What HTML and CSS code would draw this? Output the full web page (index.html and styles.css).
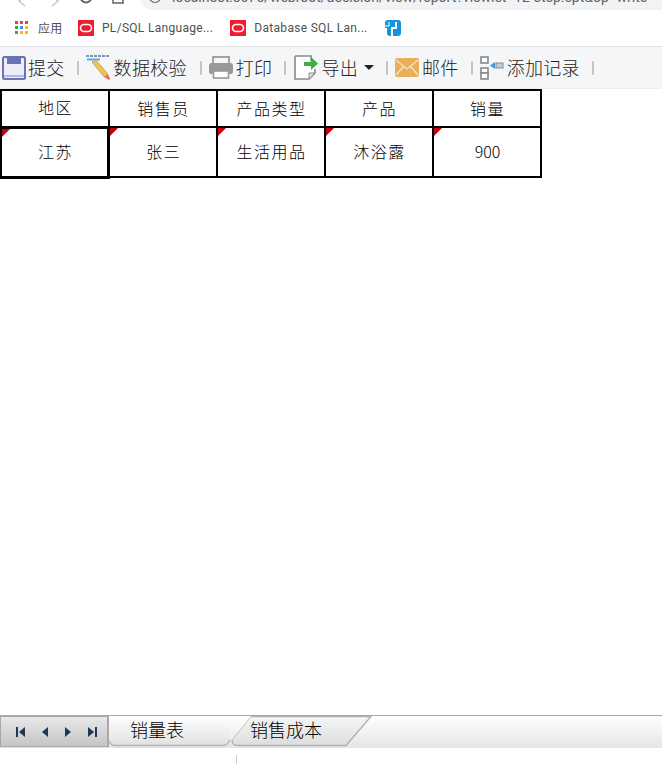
FILE: index.html
```html
<!DOCTYPE html>
<html lang="zh-CN">
<head>
    <meta charset="UTF-8">
    <title>填报</title>
    <link rel="stylesheet" href="styles.css">
</head>
<body>
    <div class="browser-top">
        <svg class="nav-icons" width="125" height="10" viewBox="0 0 125 10" fill="none" stroke="#5f6368" stroke-width="1.5">
            <path d="M25 -4l-6 5 6 5" stroke="#c4c6c9"/>
            <path d="M52 -4l6 5-6 5" stroke="#c4c6c9"/>
            <circle cx="86" cy="-3" r="5.500" stroke-width="2"/>
            <path d="M113 -3v6h10v-6"/>
        </svg>
        <div class="address">
            <svg width="12" height="10" viewBox="0 0 12 10" fill="none" stroke="#5f6368" stroke-width="1.2"><circle cx="6" cy="-3" r="5.500"/></svg>
            <span class="url">localhost:8075/webroot/decision/view/report?viewlet=12-step.cpt&amp;op=write</span>
        </div>
    </div>

    <div class="bookmarks">
        <a class="bookmark apps">
            <svg width="13" height="13" viewBox="0 0 13 13">
                <rect x="0" y="0" width="3" height="3" fill="#ea4335"/><rect x="5" y="0" width="3" height="3" fill="#ea4335"/><rect x="10" y="0" width="3" height="3" fill="#ea4335"/>
                <rect x="0" y="5" width="3" height="3" fill="#34a853"/><rect x="5" y="5" width="3" height="3" fill="#4285f4"/><rect x="10" y="5" width="3" height="3" fill="#fbbc05"/>
                <rect x="0" y="10" width="3" height="3" fill="#34a853"/><rect x="5" y="10" width="3" height="3" fill="#fbbc05"/><rect x="10" y="10" width="3" height="3" fill="#fbbc05"/>
            </svg>
            <span class="apps-label">应用</span>
        </a>
        <a class="bookmark first">
            <svg width="16" height="16" viewBox="0 0 16 16"><rect width="16" height="16" fill="#ed1c2e"/><rect x="2.500" y="4.500" width="11" height="7" rx="3.500" fill="none" stroke="#fff" stroke-width="1.600"/></svg>
            <span>PL/SQL Language...</span>
        </a>
        <a class="bookmark second">
            <svg width="16" height="16" viewBox="0 0 16 16"><rect width="16" height="16" fill="#ed1c2e"/><rect x="2.500" y="4.500" width="11" height="7" rx="3.500" fill="none" stroke="#fff" stroke-width="1.600"/></svg>
            <span>Database SQL Lan...</span>
        </a>
        <a class="bookmark third">
            <svg width="16" height="16" viewBox="0 0 16 16"><path d="M3 0h10a3 3 0 0 1 3 3v10a3 3 0 0 1-3 3H5a3 3 0 0 1-3-3V8H0V3a3 3 0 0 1 3-3z" fill="#1296db"/><path d="M7 16V8h4V2" fill="none" stroke="#fff" stroke-width="2"/><path d="M0 6h4V2" fill="none" stroke="#fff" stroke-width="1"/></svg>
        </a>
    </div>

    <div class="toolbar">
        <button class="tool first-tool">
            <svg width="24" height="24" viewBox="0 0 24 24"><rect width="24" height="24" rx="2.500" fill="#6b73b3"/><rect x="2" y="2" width="20" height="20" rx="1" fill="#eceDf6"/><rect x="5" y="0" width="14" height="8" fill="#6b73b3"/><rect x="2" y="19" width="20" height="2" fill="#b5b9dc"/></svg>
            <span>提交</span>
        </button>
        <i class="sep"></i>
        <button class="tool check-tool">
            <svg width="25" height="25" viewBox="0 0 25 25"><path d="M0 1h23" stroke="#7d93b8" stroke-width="2" stroke-dasharray="3 1"/><path d="M1 4.500h13" stroke="#5aa8e6" stroke-width="2"/><path d="M6 7l4-2 12 14-4 3z" fill="#f2c14e" stroke="#b9a27a" stroke-width="0.800"/><path d="M18 22l4-3 2 5-1 1z" fill="#ef6f4f"/></svg>
            <span>数据校验</span>
        </button>
        <i class="sep"></i>
        <button class="tool">
            <svg width="24" height="23" viewBox="0 0 24 23"><rect x="4" y="1" width="16" height="7" fill="none" stroke="#999" stroke-width="1.800"/><rect x="0" y="7" width="24" height="11" rx="2.500" fill="#999"/><rect x="4.500" y="15" width="15" height="7" fill="#fff" stroke="#999" stroke-width="1.600"/></svg>
            <span>打印</span>
        </button>
        <i class="sep"></i>
        <button class="tool nudge">
            <svg width="24" height="25" viewBox="0 0 24 25"><path d="M1 1h16v5M1 1v23h14l6-6v-4" fill="#fff" stroke="#8a8a8a" stroke-width="1.600"/><path d="M15 24v-6h6z" fill="#ddd" stroke="#8a8a8a"/><path d="M10 7h7V2l7 6.500-7 6.500v-4h-7z" fill="#3fae4a"/></svg>
            <span>导出</span>
            <b class="caret"></b>
        </button>
        <i class="sep"></i>
        <button class="tool">
            <svg width="24" height="19" viewBox="0 0 24 19"><rect width="24" height="19" rx="2" fill="#e9ae58"/><path d="M1 2l11 9 11-9M1 17l8-9M23 17l-8-9" fill="none" stroke="#f8e3c2" stroke-width="1.300"/></svg>
            <span>邮件</span>
        </button>
        <i class="sep"></i>
        <button class="tool">
            <svg width="24" height="24" viewBox="0 0 24 24"><rect x="1" y="1" width="7" height="6" fill="#fff" stroke="#888" stroke-width="1.600"/><rect x="1" y="12" width="7" height="5" fill="#fff" stroke="#888" stroke-width="1.600"/><rect x="1" y="17" width="7" height="6" fill="#fff" stroke="#888" stroke-width="1.600"/><rect x="16" y="7" width="7" height="5" fill="#bcd0e0" stroke="#888"/><path d="M10 9.500l5-3.500v7z" fill="#3f9be0"/></svg>
            <span>添加记录</span>
        </button>
        <i class="sep"></i>
    </div>

    <table class="sheet">
        <tr class="head">
            <td>地区</td><td>销售员</td><td>产品类型</td><td>产品</td><td>销量</td>
        </tr>
        <tr class="data">
            <td class="selected"><i class="mark"></i>江苏</td>
            <td><i class="mark"></i>张三</td>
            <td><i class="mark"></i>生活用品</td>
            <td><i class="mark"></i>沐浴露</td>
            <td class="number"><i class="mark"></i>900</td>
        </tr>
    </table>

    <div class="spacer"></div>

    <div class="tabbar">
        <div class="pager">
            <svg width="11" height="12" viewBox="0 0 11 12"><rect x="1" y="1" width="2" height="10" fill="#1d3a52"/><path d="M10 1v10L4 6z" fill="#1d3a52"/></svg>
            <svg width="8" height="12" viewBox="0 0 8 12"><path d="M7 1v10L1 6z" fill="#1d3a52"/></svg>
            <svg width="8" height="12" viewBox="0 0 8 12"><path d="M1 1v10l6-5z" fill="#1d3a52"/></svg>
            <svg width="11" height="12" viewBox="0 0 11 12"><rect x="8" y="1" width="2" height="10" fill="#1d3a52"/><path d="M1 1v10l6-5z" fill="#1d3a52"/></svg>
        </div>
        <div class="tab active">
            <svg class="tab-shape" width="122" height="31" viewBox="0 0 122 31">
                <defs><linearGradient id="tabActive" x1="0" y1="0" x2="0" y2="1"><stop offset="0" stop-color="#fff"/><stop offset="1" stop-color="#e0e1e1"/></linearGradient></defs>
                <path d="M1 0V25Q1 29.500 6 29.500H115Q118 29.500 121 24V0z" fill="url(#tabActive)"/>
                <path d="M1 25Q1 29.500 6 29.500H115Q118 29.500 121 24" fill="none" stroke="#b4b4b4" stroke-width="1.500"/>
            </svg>
            <span>销量表</span>
        </div>
        <div class="tab other">
            <svg class="tab-shape" width="142" height="31" viewBox="0 0 142 31">
                <defs><linearGradient id="tabOther" x1="0" y1="0" x2="0" y2="1"><stop offset="0" stop-color="#f6f6f6"/><stop offset="1" stop-color="#dcdddd"/></linearGradient></defs>
                <path d="M1 24L20 0.500H140L115 29.500H6Q1 29.500 1 24z" fill="url(#tabOther)"/>
                <path d="M1 24L20 0.500" fill="none" stroke="#c4c4c4"/>
                <path d="M20 0.500H140L115 29.500H6Q1 29.500 1 24" fill="none" stroke="#b0b0b0" stroke-width="1.300"/>
            </svg>
            <span>销售成本</span>
        </div>
    </div>
    <div class="statusbar"><i class="status-line"></i></div>
</body>
</html>
```

FILE: styles.css
```css
* {
    box-sizing: border-box;
    margin: 0;
    padding: 0;
}

html, body {
    height: 764px;
    overflow: hidden;
}

body {
    font-family: "Liberation Sans", "Noto Sans CJK SC", sans-serif;
    background-color: #fff;
    display: flex;
    flex-direction: column;
}

.browser-top {
    height: 10px;
    display: flex;
    background-color: #fff;
    overflow: hidden;
}

.nav-icons {
    flex: none;
    width: 141px;
    padding-right: 16px;
}

.address {
    flex: 1;
    height: 10px;
    background-color: #f1f3f4;
    border-bottom-left-radius: 10px;
    display: flex;
    padding-left: 8px;
    gap: 11px;
    overflow: hidden;
}

.url {
    font-family: "Roboto", sans-serif;
    font-size: 14px;
    line-height: 14px;
    margin-top: -10px;
    color: #5f6368;
    white-space: nowrap;
}

.bookmarks {
    height: 37px;
    display: flex;
    align-items: center;
    border-bottom: 1px solid #dfe1e5;
    padding-bottom: 1px;
    padding-left: 15px;
    font-family: "Roboto", "Noto Sans CJK SC", sans-serif;
    font-size: 12px;
    color: #4d5156;
}

.bookmark {
    display: flex;
    align-items: center;
    gap: 8px;
    white-space: nowrap;
}

.bookmark span {
    letter-spacing: 0.3px;
}

.apps { gap: 10px; }
.apps-label { width: 25px; }
.first { margin-left: 15px; }
.second { margin-left: 17px; }
.third { margin-left: 17px; }

.toolbar {
    height: 42px;
    display: flex;
    align-items: center;
    background-color: #f5f6f8;
    border-bottom: 1px solid #eceef0;
    padding-left: 2px;
}

.tool {
    display: flex;
    align-items: center;
    gap: 3px;
    border: none;
    background: none;
    font-family: "Noto Sans CJK SC", sans-serif;
    font-size: 18px;
    font-weight: 300;
    line-height: 24px;
    letter-spacing: 0.3px;
    color: #222;
    white-space: nowrap;
}

.first-tool {
    gap: 2px;
}

.check-tool {
    margin-right: 1px;
}

.nudge {
    margin-left: 1px;
}

.tool span {
    margin-top: -2px;
}

.sep {
    width: 2px;
    height: 14px;
    margin: 0 7px 0 12px;
    background-color: #c4c4c4;
}

.caret {
    width: 0;
    height: 0;
    margin-left: 3px;
    border: 5px solid transparent;
    border-top: 5px solid #222;
    border-bottom: none;
}

.sheet {
    width: 542px;
    table-layout: fixed;
    border-collapse: collapse;
    margin-left: -1px;
    font-family: "Noto Sans CJK SC", sans-serif;
    font-size: 16px;
    font-weight: 300;
    letter-spacing: 1.5px;
    color: #000;
}

.sheet td {
    position: relative;
    width: 108px;
    border: 2px solid #000;
    text-align: center;
    vertical-align: middle;
    padding-bottom: 2px;
    padding-left: 2px;
}

.head td { height: 37px; }
.data td { height: 50px; }

.sheet td.selected {
    border-width: 3px;
}

.sheet td.number {
    letter-spacing: 0;
}

.mark {
    position: absolute;
    top: 0;
    left: 0;
    width: 0;
    height: 0;
    border-top: 8px solid #c8000a;
    border-right: 8px solid transparent;
}

.spacer {
    flex: 1;
}

.tabbar {
    height: 32px;
    display: flex;
    border-top: 1px solid #a9a9a9;
    background: linear-gradient(#fff, #e6e6e6);
}

.pager {
    width: 109px;
    display: flex;
    align-items: center;
    gap: 15px;
    padding-left: 14px;
    background: linear-gradient(#e8e8e8, #c6c5c6);
    border: 1px solid #a8a8a8;
    border-right-width: 2px;
}

.tab {
    position: relative;
    height: 31px;
    font-family: "Noto Sans CJK SC", sans-serif;
    font-size: 18px;
    font-weight: 300;
    line-height: 26px;
    color: #000;
}

.tab span {
    position: relative;
}

.tab-shape {
    position: absolute;
    top: 0;
    left: 0;
}

.active {
    width: 122px;
    padding-left: 21px;
}

.other {
    width: 142px;
    padding-left: 19px;
}

.statusbar {
    height: 17px;
    padding-top: 7px;
    padding-left: 236px;
    background-color: #fff;
    border-top: 1px solid #e4e4e4;
}

.status-line {
    display: block;
    width: 1px;
    height: 10px;
    background-color: #ccc;
}
```
